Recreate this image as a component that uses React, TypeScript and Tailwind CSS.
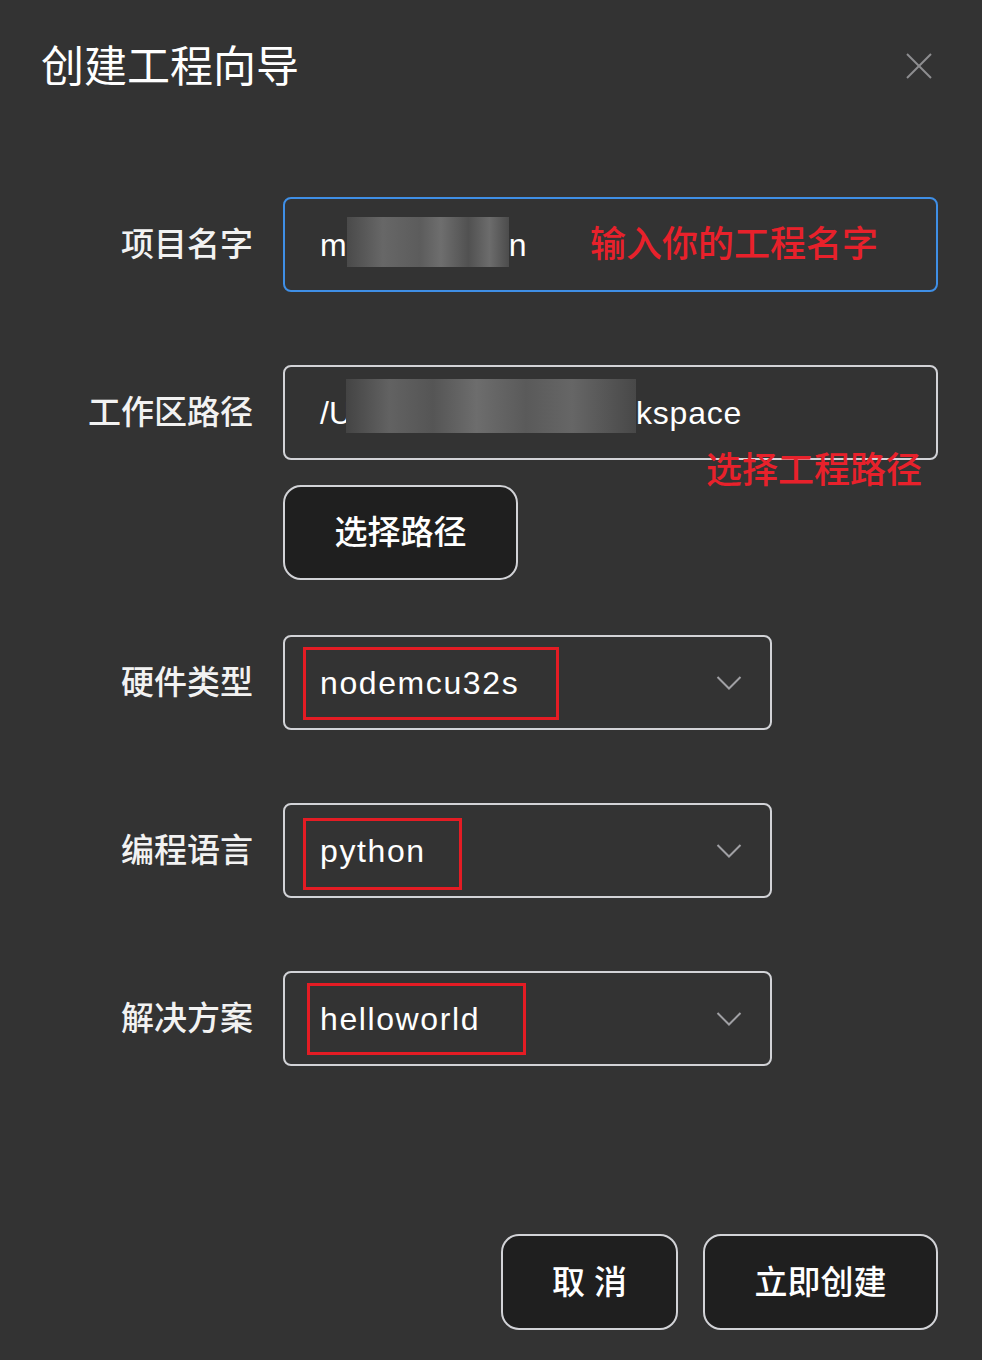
import React from "react";

const FONT = "font-['Liberation_Sans','Noto_Sans_CJK_SC',sans-serif]";

function Chevron() {
  return (
    <svg width="26" height="16" viewBox="0 0 26 16" className="absolute right-[28px] top-1/2 -translate-y-1/2">
      <polyline points="1.5,2 13,13.5 24.5,2" fill="none" stroke="#a0a0a4" strokeWidth="2" />
    </svg>
  );
}

function Label({ children }: { children: React.ReactNode }) {
  return (
    <div className="w-[253px] shrink-0 text-right text-[33px] leading-none font-medium text-[#f2f2f2]">
      {children}
    </div>
  );
}

function SelectBox({
  value,
  box,
}: {
  value: string;
  box: string;
}) {
  return (
    <div className="relative ml-[30px] w-[489px] h-[95px] rounded-[8px] border-2 border-[#d2d3d7] flex items-center pl-[35px]">
      <span className="text-[32px] leading-none tracking-[1.6px] text-white">{value}</span>
      <div className={"absolute border-[3px] border-[#e41c24] " + box} />
      <Chevron />
    </div>
  );
}

export default function App() {
  return (
    <div className={"w-[982px] h-[1360px] bg-[#333333] flex flex-col " + FONT}>
      {/* Header */}
      <div className="flex items-center justify-between pl-[41px] pr-[50px] pt-[46px]">
        <h1 className="text-[43px] leading-none font-normal text-white">创建工程向导</h1>
        <svg width="26" height="26" viewBox="0 0 26 26" className="-mt-[4px]">
          <line x1="1" y1="1" x2="25" y2="25" stroke="#8e8e90" strokeWidth="2" />
          <line x1="25" y1="1" x2="1" y2="25" stroke="#8e8e90" strokeWidth="2" />
        </svg>
      </div>

      {/* Form */}
      <div className="flex flex-col mt-[108px]">
        {/* 项目名字 */}
        <div className="flex items-center">
          <Label>项目名字</Label>
          <div className="relative ml-[30px] w-[655px] h-[95px] rounded-[8px] border-2 border-[#3f8fe6] flex items-center pl-[35px] text-[32px] leading-none text-white">
            <span>m</span>
            <span className="inline-block w-[162px] h-[50px] mb-[6px] bg-[linear-gradient(90deg,#4a4a4a,#676767_22%,#5c5c5c_45%,#6e6e6e_58%,#515151_75%,#6c6c6c_88%,#4c4c4c)]" />
            <span>n</span>
            <span className="absolute left-[305px] top-1/2 -translate-y-1/2 text-[36px] leading-none font-medium text-[#e8212b]">
              输入你的工程名字
            </span>
          </div>
        </div>

        {/* 工作区路径 */}
        <div className="flex items-center mt-[73px]">
          <Label>工作区路径</Label>
          <div className="relative ml-[30px] w-[655px] h-[95px] rounded-[8px] border-2 border-[#d2d3d7] flex items-center pl-[35px] text-[32px] leading-none text-white">
            <span>/U</span>
            <span className="inline-block -ml-[6px] w-[290px] h-[54px] mb-[14px] bg-[linear-gradient(90deg,#444,#626262_15%,#555_30%,#6d6d6d_45%,#5a5a5a_62%,#666_78%,#484848)]" />
            <span className="tracking-[0.8px]">kspace</span>
            <span className="absolute left-[421px] top-[86px] text-[36px] leading-none font-medium text-[#e8212b]">
              选择工程路径
            </span>
          </div>
        </div>
        <div className="ml-[283px] mt-[25px]">
          <button className="w-[235px] h-[95px] rounded-[18px] border-2 border-[#d2d3d7] bg-[#1f1f1f] text-[33px] leading-none font-medium text-white">
            选择路径
          </button>
        </div>

        {/* 硬件类型 */}
        <div className="flex items-center mt-[55px]">
          <Label>硬件类型</Label>
          <SelectBox value="nodemcu32s" box="left-[18px] top-[10px] w-[256px] h-[73px]" />
        </div>

        {/* 编程语言 */}
        <div className="flex items-center mt-[73px]">
          <Label>编程语言</Label>
          <SelectBox value="python" box="left-[18px] top-[13px] w-[159px] h-[72px]" />
        </div>

        {/* 解决方案 */}
        <div className="flex items-center mt-[73px]">
          <Label>解决方案</Label>
          <SelectBox value="helloworld" box="left-[22px] top-[10px] w-[219px] h-[72px]" />
        </div>
      </div>

      {/* Footer */}
      <div className="mt-auto flex justify-end gap-[25px] pr-[44px] pb-[30px]">
        <button className="w-[177px] h-[96px] rounded-[18px] border-2 border-[#d2d3d7] bg-[#1f1f1f] text-[33px] leading-none font-medium text-white">
          取 消
        </button>
        <button className="w-[235px] h-[96px] rounded-[18px] border-2 border-[#d2d3d7] bg-[#1f1f1f] text-[33px] leading-none font-medium text-white">
          立即创建
        </button>
      </div>
    </div>
  );
}
